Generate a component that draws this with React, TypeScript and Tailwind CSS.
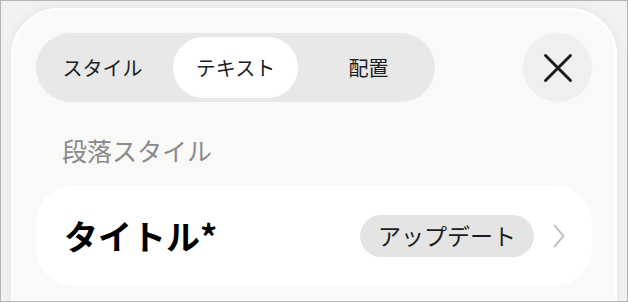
import React, { useState } from 'react';

const tabs = ['スタイル', 'テキスト', '配置'];

const App: React.FC = () => {
  const [active, setActive] = useState(1);

  return (
    <div
      className="w-[628px] h-[302px] overflow-hidden border border-[#b4b4b4] bg-[#f1f1f1] px-[10px] pt-[7px]"
      style={{ fontFamily: '"Noto Sans CJK JP", "Noto Sans", sans-serif' }}
    >
      {/* Sheet */}
      <div className="h-[320px] rounded-t-[48px] border-2 border-white bg-[#f9f9f7] px-[23px] pt-[23px] shadow-[0_0_12px_rgba(0,0,0,0.05)]">
        {/* Header: segmented control + close */}
        <div className="flex items-center justify-between">
          <div className="grid h-[69px] w-[399px] grid-cols-3 rounded-full bg-[#e8e8e8]">
            {tabs.map((tab, i) => (
              <button key={tab} className="p-[4px]" onClick={() => setActive(i)}>
                <div
                  className={`flex h-full items-center justify-center rounded-full text-[20px] text-[#1c1c1e] ${
                    active === i ? 'bg-white' : ''
                  }`}
                >
                  {tab}
                </div>
              </button>
            ))}
          </div>

          <button className="flex h-[69px] w-[69px] items-center justify-center rounded-full bg-[#efefef]">
            <svg width="30" height="30" viewBox="0 0 30 30" fill="none">
              <path
                d="M2.5 2.5 L27.5 27.5 M27.5 2.5 L2.5 27.5"
                stroke="#1c1c1e"
                strokeWidth="3"
                strokeLinecap="round"
              />
            </svg>
          </button>
        </div>

        {/* Section heading */}
        <div className="mt-[31px] pl-[26px] text-[25px] leading-[34px] text-[#8a8a8e]">段落スタイル</div>

        {/* Paragraph style row */}
        <div className="mt-[18px] flex h-[101px] items-center justify-between rounded-[38px] bg-white pl-[28px] pr-[27px]">
          <span className="text-[34px] font-bold text-black">タイトル*</span>
          <div className="flex items-center gap-[19px]">
            <span className="flex h-[42px] items-center rounded-full bg-[#e4e4e4] px-[18px] text-[23px] text-[#1c1c1e]">
              アップデート
            </span>
            <svg width="12" height="24" viewBox="0 0 12 24" fill="none">
              <path d="M1.5 1.5 L10.5 12 L1.5 22.5" stroke="#c4c4c7" strokeWidth="2" strokeLinecap="round" strokeLinejoin="round" />
            </svg>
          </div>
        </div>
      </div>
    </div>
  );
};

export default App;
